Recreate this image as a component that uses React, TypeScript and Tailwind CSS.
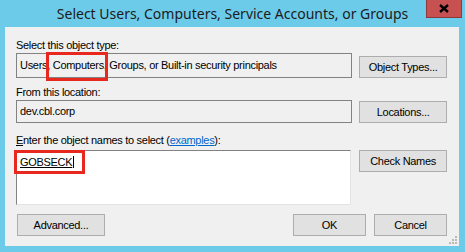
import React from 'react';

const ui = { fontFamily: '"Liberation Sans", Arial, sans-serif', letterSpacing: '-0.3px' };

const Btn = ({ label, className = '' }: { label: React.ReactNode; className?: string }) => (
  <div
    className={`flex items-center justify-center border border-[#adadad] bg-[#e1e1e1] text-[11px] text-black ${className}`}
  >
    {label}
  </div>
);

const SizeGrip = () => (
  <svg width="8" height="8" viewBox="0 0 8 8" className="absolute bottom-[2px] right-[2px]">
    {[
      [6, 0],
      [3, 3],
      [6, 3],
      [0, 6],
      [3, 6],
      [6, 6],
    ].map(([x, y], i) => (
      <rect key={i} x={x} y={y} width="2" height="2" fill="#b8b8b8" />
    ))}
  </svg>
);

export default function App() {
  return (
    <div className="flex h-[252px] w-[465px] flex-col bg-[#6dcbea]" style={ui}>
      {/* title bar */}
      <div className="relative flex h-[27px] items-center justify-center">
        <span
          className="text-[14px] tracking-normal text-[#1b1b1b]"
          style={{ fontFamily: '"Noto Sans", "Open Sans", sans-serif' }}
        >
          Select Users, Computers, Service Accounts, or Groups
        </span>
        <div className="absolute right-[3px] top-0 flex h-[18px] w-[36px] items-center justify-center border border-t-0 border-[#8a3a3a] bg-[#c75050]">
          <svg width="10" height="9" viewBox="0 0 10 9">
            <path d="M1 1 L9 8 M9 1 L1 8" stroke="#000" strokeWidth="2.4" />
          </svg>
        </div>
      </div>

      {/* client area */}
      <div className="relative ml-[5px] mr-[6px] flex h-[219px] flex-col bg-[#f0f0f0] pl-[11px] pr-[12px] text-[11px] text-black">
        <div className="mt-[11px] h-[14px] leading-[14px]">Select this object type:</div>
        <div className="mt-[1px] flex items-start gap-[7px]">
          <div className="relative flex h-[25px] w-[337px] items-center border border-[#828282] pl-[3px]">
            Users, Computers, Groups, or Built-in security principals
            <div className="absolute left-[29px] top-[-2px] h-[29px] w-[62px] border-[3px] border-[#e8271e]" />
          </div>
          <Btn label="Object Types..." className="mt-[3px] h-[22px] w-[88px]" />
        </div>

        <div className="mt-[7px] h-[14px] leading-[14px]">From this location:</div>
        <div className="mt-[1px] flex items-start gap-[7px]">
          <div className="flex h-[23px] w-[337px] items-center border border-[#828282] pl-[3px]">
            dev.cbl.corp
          </div>
          <Btn label="Locations..." className="mt-[1px] h-[22px] w-[88px]" />
        </div>

        <div className="mt-[10px] h-[14px] leading-[14px]">
          <span className="underline">E</span>nter the object names to select (
          <span className="text-[#0066cc] underline">examples</span>):
        </div>
        <div className="mt-[3px] flex items-start gap-[8px]">
          <div className="relative h-[55px] w-[336px] border border-[#828282] border-b-[#e3e3e3] border-r-[#e3e3e3] bg-white pl-[3px] pt-[3px]">
            <span className="border-r border-black pr-[1px] underline">GOBSECK</span>
            <div className="absolute left-[-3px] top-[-1px] h-[24px] w-[71px] border-[3px] border-[#e8271e]" />
          </div>
          <Btn label="Check Names" className="h-[22px] w-[88px]" />
        </div>

        <div className="mt-[9px] flex items-start">
          <Btn label="Advanced..." className="ml-[1px] h-[22px] w-[88px]" />
          <div className="ml-auto flex gap-[8px]">
            <Btn label="OK" className="h-[22px] w-[73px]" />
            <Btn label="Cancel" className="h-[22px] w-[73px]" />
          </div>
        </div>
        <SizeGrip />
      </div>
    </div>
  );
}
